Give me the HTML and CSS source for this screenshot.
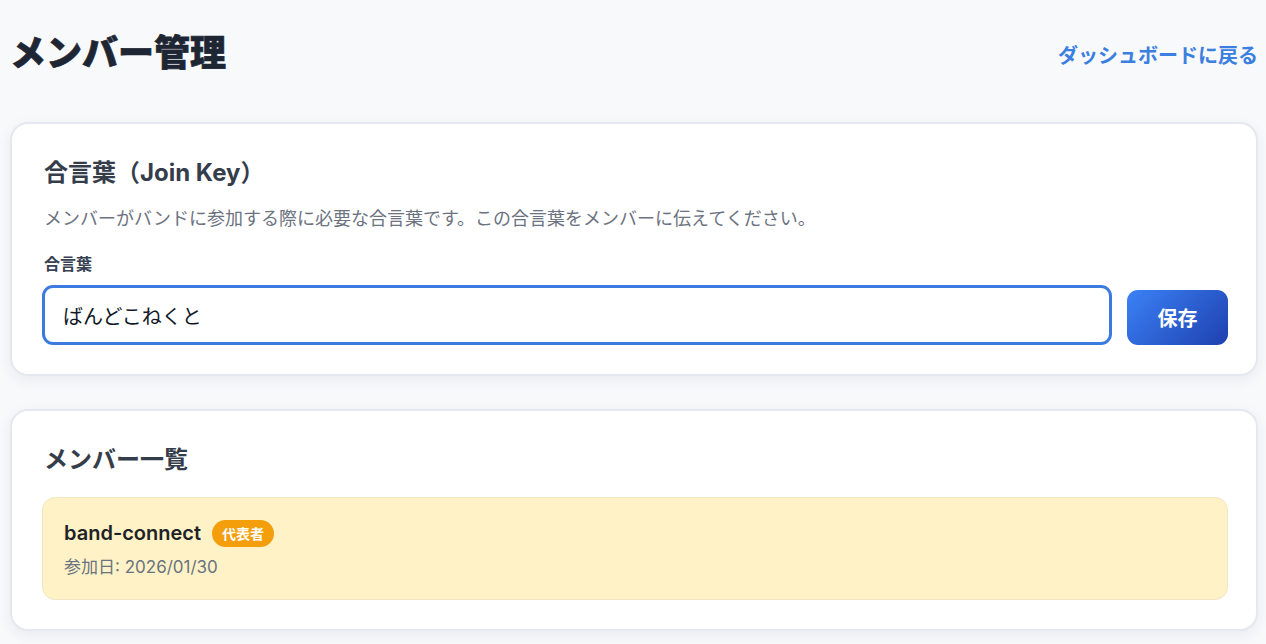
FILE: index.html
```html
<!DOCTYPE html>
<html lang="ja">
<head>
<meta charset="utf-8">
<title>メンバー管理</title>
<link rel="stylesheet" href="styles.css">
</head>
<body>
<div class="page">
  <header class="header">
    <h1 class="page-title">メンバー管理</h1>
    <a class="back-link" href="#">ダッシュボードに戻る</a>
  </header>

  <section class="card">
    <h2 class="card-title">合言葉（Join Key）</h2>
    <p class="card-desc">メンバーがバンドに参加する際に必要な合言葉です。この合言葉をメンバーに伝えてください。</p>
    <label class="field-label" for="joinkey">合言葉</label>
    <div class="field-row">
      <input id="joinkey" class="text-input" type="text" value="ばんどこねくと">
      <button class="save-btn" type="button">保存</button>
    </div>
  </section>

  <section class="card">
    <h2 class="card-title list-title">メンバー一覧</h2>
    <div class="member">
      <div class="member-name-row">
        <span class="member-name">band-connect</span>
        <span class="badge">代表者</span>
      </div>
      <div class="member-date">参加日: 2026/01/30</div>
    </div>
  </section>
</div>
</body>
</html>
```

FILE: styles.css
```css
* { box-sizing: border-box; }

html, body {
  margin: 0;
  padding: 0;
  background: #f8f9fb;
  font-family: Inter, "Noto Sans CJK JP", sans-serif;
  color: #1f2937;
}

.page {
  padding: 30px 8px 12px 10px;
}

.header {
  display: flex;
  align-items: center;
  justify-content: space-between;
  margin-bottom: 46px;
}

.page-title {
  margin: 0;
  font-size: 36px;
  font-weight: 900;
  line-height: 46px;
  color: #1e2634;
  -webkit-text-stroke: 0.7px #1e2634;
}

.back-link {
  font-size: 20px;
  font-weight: 700;
  color: #3b7fe0;
  text-decoration: none;
  margin-top: 2px;
}

.card {
  background: #ffffff;
  border: 2px solid #e5e8ee;
  border-radius: 18px;
  padding: 34px 30px 29px 30px;
  box-shadow: 0 4px 14px rgba(30, 40, 60, 0.07);
  margin-bottom: 33px;
}

.card-title {
  margin: 0 0 17px 2px;
  font-size: 24px;
  font-weight: 700;
  line-height: 30px;
  color: #353d4b;
}

.list-title {
  margin-bottom: 22px;
}

.card-desc {
  margin: 0 0 21px 2px;
  font-size: 18px;
  line-height: 27px;
  color: #6b7280;
}

.field-label {
  display: block;
  margin: 0 0 10px 2px;
  font-size: 16px;
  font-weight: 700;
  line-height: 22px;
  color: #374151;
}

.field-row {
  display: flex;
  align-items: flex-end;
  gap: 15px;
}

.text-input {
  flex: 1;
  height: 60px;
  border: 3px solid #3b7be0;
  border-radius: 11px;
  padding: 0 18px;
  font-family: Inter, "Noto Sans CJK JP", sans-serif;
  font-size: 20px;
  color: #111827;
  background: #ffffff;
  outline: none;
}

.save-btn {
  width: 101px;
  height: 55px;
  border: none;
  border-radius: 11px;
  background: linear-gradient(135deg, #3b82f6 0%, #1e40af 100%);
  color: #ffffff;
  font-family: Inter, "Noto Sans CJK JP", sans-serif;
  font-size: 20px;
  font-weight: 700;
  margin-right: -2px;
}

.member {
  background: #fef2c6;
  border: 1px solid #f1e6c2;
  border-radius: 13px;
  padding: 21px 21px 20px 21px;
  margin-right: -2px;
}

.member-name-row {
  display: flex;
  align-items: center;
  gap: 11px;
}

.member-name {
  font-size: 20px;
  font-weight: 600;
  line-height: 28px;
  color: #1f2328;
}

.badge {
  background: #f59e0b;
  color: #ffffff;
  font-size: 14px;
  font-weight: 700;
  line-height: 27px;
  padding: 0 10px;
  border-radius: 14px;
}

.member-date {
  margin-top: 8px;
  font-size: 17px;
  line-height: 24px;
  color: #6b7280;
}
```
